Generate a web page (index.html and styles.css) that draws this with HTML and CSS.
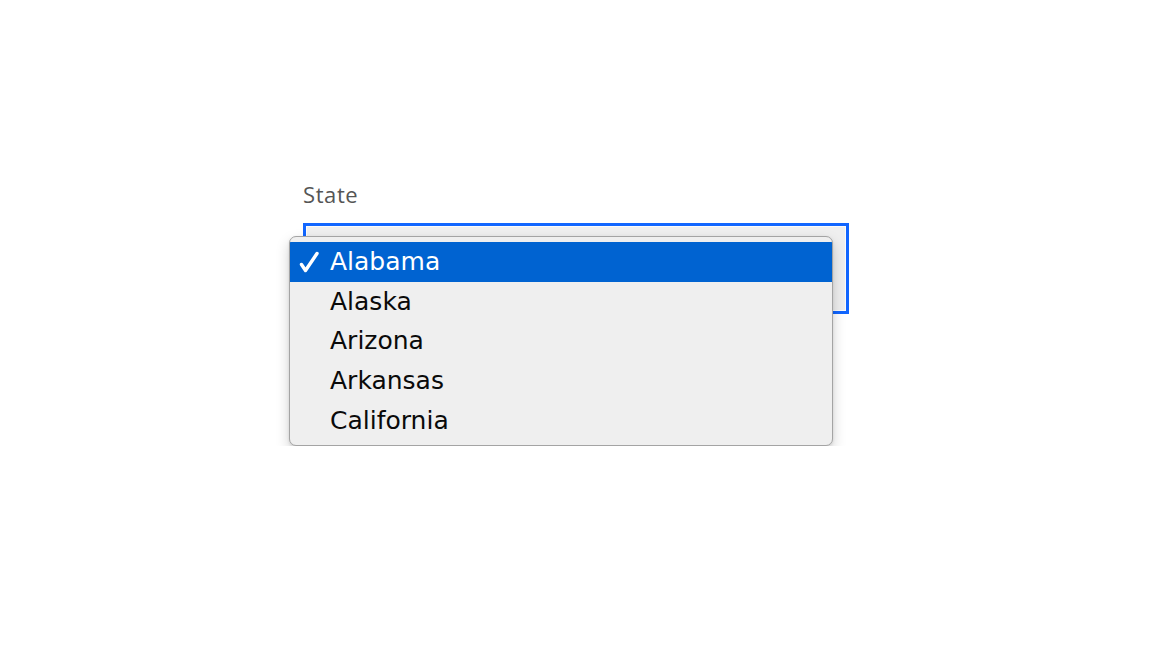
FILE: index.html
```html
<!DOCTYPE html>
<html lang="en">
<head>
<meta charset="utf-8">
<title>State select</title>
<link rel="stylesheet" href="styles.css">
</head>
<body>
<main class="page">
  <div class="form-item">
    <label class="label">State</label>
    <div class="control">
      <div class="field"></div>
      <ul class="menu">
        <li class="option selected">
          <svg class="check" width="20" height="22" viewBox="0 0 20 22"><path d="M2.5 13.5 L6.5 19.5 L18 2.5" fill="none" stroke="#fff" stroke-width="3.4" stroke-linecap="round" stroke-linejoin="round"/></svg>
          <span>Alabama</span>
        </li>
        <li class="option"><span>Alaska</span></li>
        <li class="option"><span>Arizona</span></li>
        <li class="option"><span>Arkansas</span></li>
        <li class="option"><span>California</span></li>
      </ul>
    </div>
  </div>
</main>
</body>
</html>
```
FILE: styles.css
```css
html, body {
  margin: 0;
  padding: 0;
  background: #ffffff;
}

.page {
  padding: 180px 0 0 303px;
}

.form-item {
  display: flex;
  flex-direction: column;
  width: 546px;
}

.label {
  font-family: "Open Sans", "Liberation Sans", sans-serif;
  font-size: 22px;
  line-height: 28px;
  color: #555555;
  letter-spacing: 0.6px;
  margin-bottom: 15px;
}

.control {
  display: grid;
  grid-template-columns: 546px;
  align-items: start;
  justify-items: start;
}

.field {
  grid-area: 1 / 1;
  box-sizing: border-box;
  width: 546px;
  height: 91px;
  border: 3px solid #1166ff;
  background: #efefef;
  box-shadow: inset 0 0 0 1px #fbfbfb;
}

.menu {
  grid-area: 1 / 1;
  z-index: 1;
  box-sizing: border-box;
  width: 544px;
  height: 210px;
  margin: 13px 0 0 -14px;
  padding: 5px 0 3px 0;
  list-style: none;
  background: #efefef;
  border: 1px solid #a4a4a4;
  border-radius: 7px;
  box-shadow: 0 6px 14px rgba(0, 0, 0, 0.18), 0 1px 3px rgba(0, 0, 0, 0.1);
  overflow: hidden;
}

.option {
  position: relative;
  display: flex;
  align-items: center;
  height: 39.7px;
  padding-left: 40px;
  font-family: "DejaVu Sans", "Liberation Sans", sans-serif;
  font-size: 25px;
  line-height: 40px;
  color: #0a0a0a;
}

.option.selected {
  background: #0063d1;
  color: #ffffff;
}

.check {
  position: absolute;
  left: 9px;
  top: 9px;
}
```
